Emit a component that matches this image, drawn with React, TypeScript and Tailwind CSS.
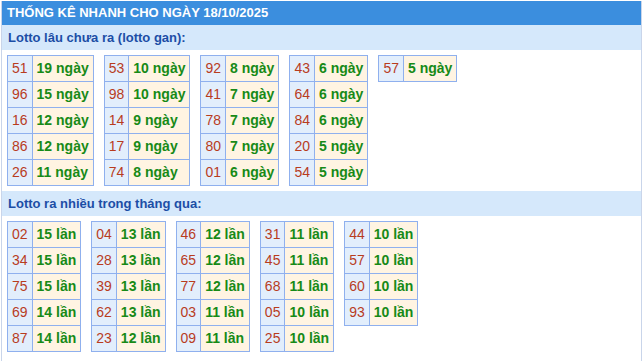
import React from "react";

type Row = [string, string];

const gan: Row[][] = [
  [["51", "19"], ["96", "15"], ["16", "12"], ["86", "12"], ["26", "11"]],
  [["53", "10"], ["98", "10"], ["14", "9"], ["17", "9"], ["74", "8"]],
  [["92", "8"], ["41", "7"], ["78", "7"], ["80", "7"], ["01", "6"]],
  [["43", "6"], ["64", "6"], ["84", "6"], ["20", "5"], ["54", "5"]],
  [["57", "5"]],
];

const nhieu: Row[][] = [
  [["02", "15"], ["34", "15"], ["75", "15"], ["69", "14"], ["87", "14"]],
  [["04", "13"], ["28", "13"], ["39", "13"], ["62", "13"], ["23", "12"]],
  [["46", "12"], ["65", "12"], ["77", "12"], ["03", "11"], ["09", "11"]],
  [["31", "11"], ["45", "11"], ["68", "11"], ["05", "10"], ["25", "10"]],
  [["44", "10"], ["57", "10"], ["60", "10"], ["93", "10"]],
];

function NumTable({ rows, unit }: { rows: Row[]; unit: string }) {
  return (
    <table className="m-[5px] border-collapse text-[14px] leading-[25px]">
      <tbody>
        {rows.map(([n, v], i) => (
          <tr key={i}>
            <td className="border border-[#8fb0ee] bg-[#e2eefc] px-[4px] py-0 text-[#b83c1e]">
              {n}
            </td>
            <td className="border border-[#8fb0ee] bg-[#fff4e2] px-[4px] py-0 font-bold text-[#178a17]">
              {v} {unit}
            </td>
          </tr>
        ))}
      </tbody>
    </table>
  );
}

export default function App() {
  return (
    <div className="font-['Liberation_Sans',Arial,sans-serif] bg-white min-h-[361px]">
      <div className="ml-px mt-px w-[641px] min-h-[360px] border-x border-[#c9d5ea]">
        <div className="flex h-[24px] items-center bg-[#3b8ede] pl-[5px] text-[13px] font-bold text-white">
          THỐNG KÊ NHANH CHO NGÀY 18/10/2025
        </div>
        <div className="flex h-[25px] items-center bg-[#d5e8fb] pl-[6px] text-[13px] font-bold text-[#1c4ea6]">
          Lotto lâu chưa ra (lotto gan):
        </div>
        <div className="flex flex-wrap items-start">
          {gan.map((t, i) => (
            <NumTable key={i} rows={t} unit="ngày" />
          ))}
        </div>
        <div className="flex h-[25px] items-center bg-[#d5e8fb] pl-[6px] text-[13px] font-bold text-[#1c4ea6]">
          Lotto ra nhiều trong tháng qua:
        </div>
        <div className="flex flex-wrap items-start">
          {nhieu.map((t, i) => (
            <NumTable key={i} rows={t} unit="lần" />
          ))}
        </div>
      </div>
    </div>
  );
}
